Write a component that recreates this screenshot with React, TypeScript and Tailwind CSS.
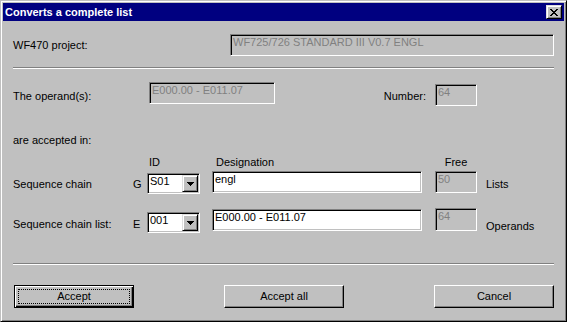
import React from 'react';

const raised =
  'border border-t-[#dfdfdf] border-l-[#dfdfdf] border-r-black border-b-black shadow-[inset_1px_1px_0_#fff,inset_-1px_-1px_0_#808080] bg-[#c0c0c0]';
const sunken =
  'border border-t-[#808080] border-l-[#808080] border-r-white border-b-white shadow-[inset_1px_1px_0_#000,inset_-1px_-1px_0_#c0c0c0]';

interface FieldProps {
  value: string;
  className?: string;
  disabled?: boolean;
}

const Field: React.FC<FieldProps> = ({ value, className = '', disabled }) => (
  <div
    className={`${sunken} ${className} p-[1px] pl-[2px] whitespace-nowrap overflow-hidden ${
      disabled ? 'bg-[#c0c0c0] text-[#808080]' : 'bg-white text-black'
    }`}
  >
    {value}
  </div>
);

const Combo: React.FC<{ value: string; className?: string }> = ({ value, className = '' }) => (
  <div className={`${sunken} ${className} bg-white p-[1px] flex`}>
    <span className="flex-1 pl-[1px]">{value}</span>
    <div className={`${raised} w-[16px] flex items-center justify-center`}>
      <svg width="7" height="4" viewBox="0 0 7 4" shapeRendering="crispEdges">
        <path d="M0 0h7v1H0z M1 1h5v1H1z M2 2h3v1H2z M3 3h1v1H3z" fill="#000" />
      </svg>
    </div>
  </div>
);

const Separator = ({ className = '' }: { className?: string }) => (
  <div className={`w-[541px] h-[2px] border-t border-t-[#808080] border-b border-b-white ${className}`} />
);

const Button: React.FC<{ label: string; isDefault?: boolean }> = ({ label, isDefault }) =>
  isDefault ? (
    <button className="relative w-[120px] h-[23px] border border-black bg-[#c0c0c0] shadow-[inset_1px_1px_0_#fff,inset_-1px_-1px_0_#000,inset_-2px_-2px_0_#808080] flex items-center justify-center text-black">
      <span className="absolute inset-[3px] border border-dotted border-black" />
      {label}
    </button>
  ) : (
    <button className="w-[120px] h-[23px] border border-t-white border-l-white border-r-black border-b-black bg-[#c0c0c0] shadow-[inset_-1px_-1px_0_#808080] flex items-center justify-center text-black">
      {label}
    </button>
  );

export default function App() {
  return (
    <div className="w-[567px] h-[322px] overflow-hidden bg-[#c0c0c0] border border-t-[#c0c0c0] border-l-[#c0c0c0] border-r-black border-b-black shadow-[inset_1px_1px_0_#fff,inset_-1px_-1px_0_#808080] p-[2px] font-['Liberation_Sans',Arial,sans-serif] text-[11px] leading-[13px] text-black">
      {/* Title bar */}
      <div className="h-[18px] bg-[#000080] flex items-center justify-between pl-[2px] pr-[2px]">
        <span className="text-white font-bold">Converts a complete list</span>
        <div className={`${raised} w-[16px] h-[14px] flex items-center justify-center pr-[1px]`}>
          <svg width="8" height="7" viewBox="0 0 8 7" shapeRendering="crispEdges">
            <path
              d="M0 0h2v1H0z M6 0h2v1H6z M1 1h2v1H1z M5 1h2v1H5z M2 2h4v1H2z M3 3h2v1H3z M2 4h4v1H2z M1 5h2v1H1z M5 5h2v1H5z M0 6h2v1H0z M6 6h2v1H6z"
              fill="#000"
            />
          </svg>
        </div>
      </div>

      {/* Body */}
      <div className="pl-[10px] flex flex-col">
        <div className="mt-[13px] h-[22px] flex items-center">
          <span className="w-[217px]">WF470 project:</span>
          <Field value="WF725/726 STANDARD III V0.7 ENGL" disabled className="w-[324px] h-[22px]" />
        </div>

        <Separator className="mt-[11px]" />

        <div className="mt-[13px] h-[24px] flex items-start">
          <span className="w-[136px] mt-[8px]">The operand(s):</span>
          <Field value="E000.00 - E011.07" disabled className="w-[126px] h-[22px]" />
          <span className="w-[151px] mt-[8px] text-right">Number:</span>
          <Field value="64" disabled className="ml-[9px] mt-[2px] w-[42px] h-[22px]" />
        </div>

        <div className="mt-[28px]">are accepted in:</div>

        <div className="mt-[9px] flex">
          <span className="w-[136px]" />
          <span className="w-[67px]">ID</span>
          <span className="w-[219px]">Designation</span>
          <span className="w-[42px] text-center">Free</span>
        </div>

        <div className="mt-[2px] h-[24px] flex items-start">
          <span className="w-[120px] mt-[7px]">Sequence chain</span>
          <span className="w-[14px] mt-[7px]">G</span>
          <Combo value="S01" className="mt-[2px] w-[53px] h-[21px]" />
          <Field value="engl" className="ml-[12px] w-[210px] h-[22px]" />
          <Field value="50" disabled className="ml-[13px] w-[42px] h-[22px]" />
          <span className="ml-[9px] mt-[7px]">Lists</span>
        </div>

        <div className="mt-[13px] h-[24px] flex items-start">
          <span className="w-[120px] mt-[10px]">Sequence chain list:</span>
          <span className="w-[14px] mt-[10px]">E</span>
          <Combo value="001" className="mt-[4px] w-[53px] h-[21px]" />
          <Field value="E000.00 - E011.07" className="ml-[12px] mt-[1px] w-[210px] h-[22px]" />
          <Field value="64" disabled className="ml-[13px] w-[42px] h-[23px]" />
          <span className="ml-[9px] mt-[12px]">Operands</span>
        </div>

        <Separator className="mt-[31px]" />

        <div className="mt-[20px] pl-[1px] flex gap-[90px]">
          <Button label="Accept" isDefault />
          <Button label="Accept all" />
          <Button label="Cancel" />
        </div>
      </div>
    </div>
  );
}
